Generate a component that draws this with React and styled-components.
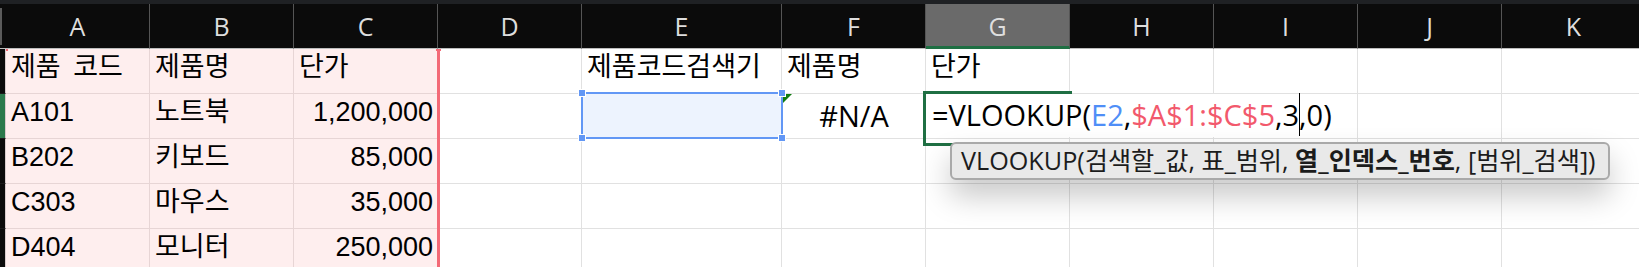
import React from 'react';
import styled, { createGlobalStyle, css } from 'styled-components';

const GlobalStyle = createGlobalStyle`
  html, body { margin: 0; padding: 0; background: #ffffff; }
  body { overflow: hidden; }
`;

const COLUMNS = ['A', 'B', 'C', 'D', 'E', 'F', 'G', 'H', 'I', 'J', 'K'];
const RANGE_COLS = ['A', 'B', 'C'];

const ROWS = [
  { A: '제품 코드', B: '제품명', C: '단가', E: '제품코드검색기', F: '제품명', G: '단가' },
  { A: 'A101', B: '노트북', C: '1,200,000' },
  { A: 'B202', B: '키보드', C: '85,000' },
  { A: 'C303', B: '마우스', C: '35,000' },
  { A: 'D404', B: '모니터', C: '250,000' },
];

const UI_FONT = '"Open Sans", "Noto Sans CJK KR", sans-serif';
const CELL_FONT = '"Liberation Sans", "Noto Sans CJK KR", sans-serif';

const Sheet = styled.div`
  width: 1639px;
  height: 267px;
  overflow: hidden;
  background: #ffffff;
  display: flex;
  flex-direction: column;
`;

const TopBand = styled.div`
  flex: none;
  height: 4px;
  background: #1f2124;
`;

const Grid = styled.div`
  display: grid;
  grid-template-columns: 6px 144px 144px 144px 144px 200px repeat(6, 144px);
  grid-auto-rows: 45px;
`;

const Corner = styled.div`
  display: flex;
  align-items: center;
  background: #0b0b0b;
  border-bottom: 1px solid #bdbdbd;
`;

const CornerBar = styled.div`
  width: 2px;
  height: 37px;
  background: #5b5b5b;
`;

const ColHeader = styled.div`
  display: flex;
  align-items: center;
  justify-content: center;
  background: ${(p) => (p.$active ? '#6a6a6a' : '#0b0b0b')};
  border-right: 1px solid #555555;
  border-bottom: ${(p) => (p.$active ? '3px solid #1f6f43' : '1px solid #bdbdbd')};
  color: #dedede;
  font-family: ${UI_FONT};
  font-size: 25px;
  line-height: 1;
  padding-top: ${(p) => (p.$active ? '2px' : '0')};
`;

const RowHeader = styled.div`
  background: ${(p) => (p.$active ? '#2b7a4c' : '#0b0b0b')};
  border-right: 1px solid #d9cccc;
  border-bottom: 1px solid #1a1a1a;
`;

const Cell = styled.div`
  position: relative;
  min-width: 0;
  display: flex;
  align-items: flex-end;
  justify-content: ${(p) =>
    p.$align === 'right' ? 'flex-end' : p.$align === 'center' ? 'center' : 'flex-start'};
  padding: 0 4px ${(p) => (p.$ui ? '7px' : '10px')} 5px;
  border-right: 1px solid ${(p) => (p.$range ? '#e7d5d5' : '#e1e1e1')};
  border-bottom: 1px solid ${(p) => (p.$range ? '#e7d5d5' : '#e1e1e1')};
  background: ${(p) => (p.$range ? '#feeeee' : p.$ref ? '#edf3fe' : '#ffffff')};
  font-family: ${(p) => (p.$ui ? UI_FONT : CELL_FONT)};
  font-size: ${(p) => (p.$ui ? '29px' : '27px')};
  line-height: 31px;
  word-spacing: 5px;
  color: #000000;
  white-space: nowrap;

  ${(p) =>
    p.$rangeRight &&
    css`
      &::after {
        content: '';
        position: absolute;
        z-index: 1;
        top: ${p.$rangeTop ? '2px' : '0'};
        right: -3px;
        bottom: -1px;
        width: 3px;
        background: #f36a77;
      }
    `}

  ${(p) =>
    p.$rangeRight &&
    p.$rangeTop &&
    css`
      &::before {
        content: '';
        position: absolute;
        z-index: 1;
        top: 0;
        right: -4px;
        width: 5px;
        height: 2px;
        background: #f36a77;
      }
    `}

  ${(p) =>
    p.$rangeLeft &&
    p.$rangeTop &&
    css`
      &::before {
        content: '';
        position: absolute;
        z-index: 1;
        top: 0;
        left: 0;
        width: 2px;
        height: 2px;
        background: #f36a77;
      }
    `}

  ${(p) =>
    p.$error &&
    css`
      &::before {
        content: '';
        position: absolute;
        z-index: 1;
        top: 0;
        left: 0;
        width: 10px;
        height: 10px;
        background: #0f7b0f;
        clip-path: polygon(0 0, 100% 0, 0 100%);
      }
    `}
`;

const RefBox = styled.div`
  position: absolute;
  z-index: 2;
  left: -1px;
  top: -2px;
  right: -2px;
  bottom: -1px;
  border: 2px solid #6297f5;
  pointer-events: none;
`;

const Handle = styled.span`
  position: absolute;
  width: 6px;
  height: 6px;
  background: #6297f5;
  outline: 1px solid #ffffff;
  ${(p) => (p.$top ? 'top: -4px;' : 'bottom: -4px;')}
  ${(p) => (p.$left ? 'left: -4px;' : 'right: -4px;')}
`;

const EditorBox = styled.div`
  position: absolute;
  z-index: 3;
  left: -3px;
  top: -3px;
  width: 146px;
  height: 49px;
  border: 3px solid #1f6f43;
  border-right: none;
  pointer-events: none;
`;

const FormulaText = styled.div`
  position: absolute;
  z-index: 2;
  left: 0;
  top: 0;
  height: 43px;
  padding: 0 6px 0 6px;
  background: #ffffff;
  font-family: ${UI_FONT};
  font-size: 29px;
  line-height: 42px;
  word-spacing: normal;
  color: #000000;
  white-space: nowrap;
`;

const RefText = styled.span`
  color: ${(p) => p.$color};
`;

const Caret = styled.span`
  display: inline-block;
  position: relative;
  width: 0;
  height: 0;

  &::after {
    content: '';
    position: absolute;
    left: 0;
    bottom: -10px;
    width: 1px;
    height: 43px;
    background: #000000;
  }
`;

const Tooltip = styled.div`
  position: absolute;
  z-index: 4;
  left: 24px;
  top: 48px;
  width: 660px;
  height: 38px;
  box-sizing: border-box;
  display: flex;
  align-items: center;
  padding: 0 9px;
  background: #e9e9e9;
  border: 2px solid #a9a9a9;
  border-radius: 6px;
  box-shadow: 0 16px 30px rgba(0, 0, 0, 0.22);
  font-family: ${UI_FONT};
  font-size: 25.2px;
  line-height: 1;
  word-spacing: normal;
  color: #1c1c1c;
  white-space: pre;
`;

const Strong = styled.b`
  font-weight: 700;
`;

function renderCell(col, rowIndex) {
  const rowNo = rowIndex + 1;
  const data = ROWS[rowIndex];
  const inRange = RANGE_COLS.includes(col);
  const key = `${col}${rowNo}`;
  const common = {
    $range: inRange,
    $rangeRight: col === 'C',
    $rangeLeft: col === 'A',
    $rangeTop: rowNo === 1,
  };

  if (key === 'E2') {
    return (
      <Cell key={key} $ref>
        <RefBox>
          <Handle $top $left />
          <Handle $top />
          <Handle $left />
          <Handle />
        </RefBox>
      </Cell>
    );
  }
  if (key === 'F2') {
    return (
      <Cell key={key} $ui $align="center" $error>
        #N/A
      </Cell>
    );
  }
  if (key === 'G2') {
    return (
      <Cell key={key}>
        <FormulaText>
          =VLOOKUP(<RefText $color="#4f8ef7">E2</RefText>,
          <RefText $color="#f2596c">$A$1:$C$5</RefText>,3<Caret />,0)
        </FormulaText>
        <EditorBox />
        <Tooltip>
          {'VLOOKUP(검색할_값, 표_범위, '}
          <Strong>열_인덱스_번호</Strong>
          {', [범위_검색])'}
        </Tooltip>
      </Cell>
    );
  }

  const value = data[col];
  const numeric = value && /^[\d,]+$/.test(value);
  return (
    <Cell key={key} {...common} $align={numeric ? 'right' : 'left'}>
      {value}
    </Cell>
  );
}

export default function App() {
  return (
    <>
      <GlobalStyle />
      <Sheet>
        <TopBand />
        <Grid>
          <Corner>
            <CornerBar />
          </Corner>
          {COLUMNS.map((c) => (
            <ColHeader key={c} $active={c === 'G'}>
              {c}
            </ColHeader>
          ))}
          {ROWS.map((_, i) => (
            <React.Fragment key={i}>
              <RowHeader $active={i === 1} />
              {COLUMNS.map((c) => renderCell(c, i))}
            </React.Fragment>
          ))}
        </Grid>
      </Sheet>
    </>
  );
}
